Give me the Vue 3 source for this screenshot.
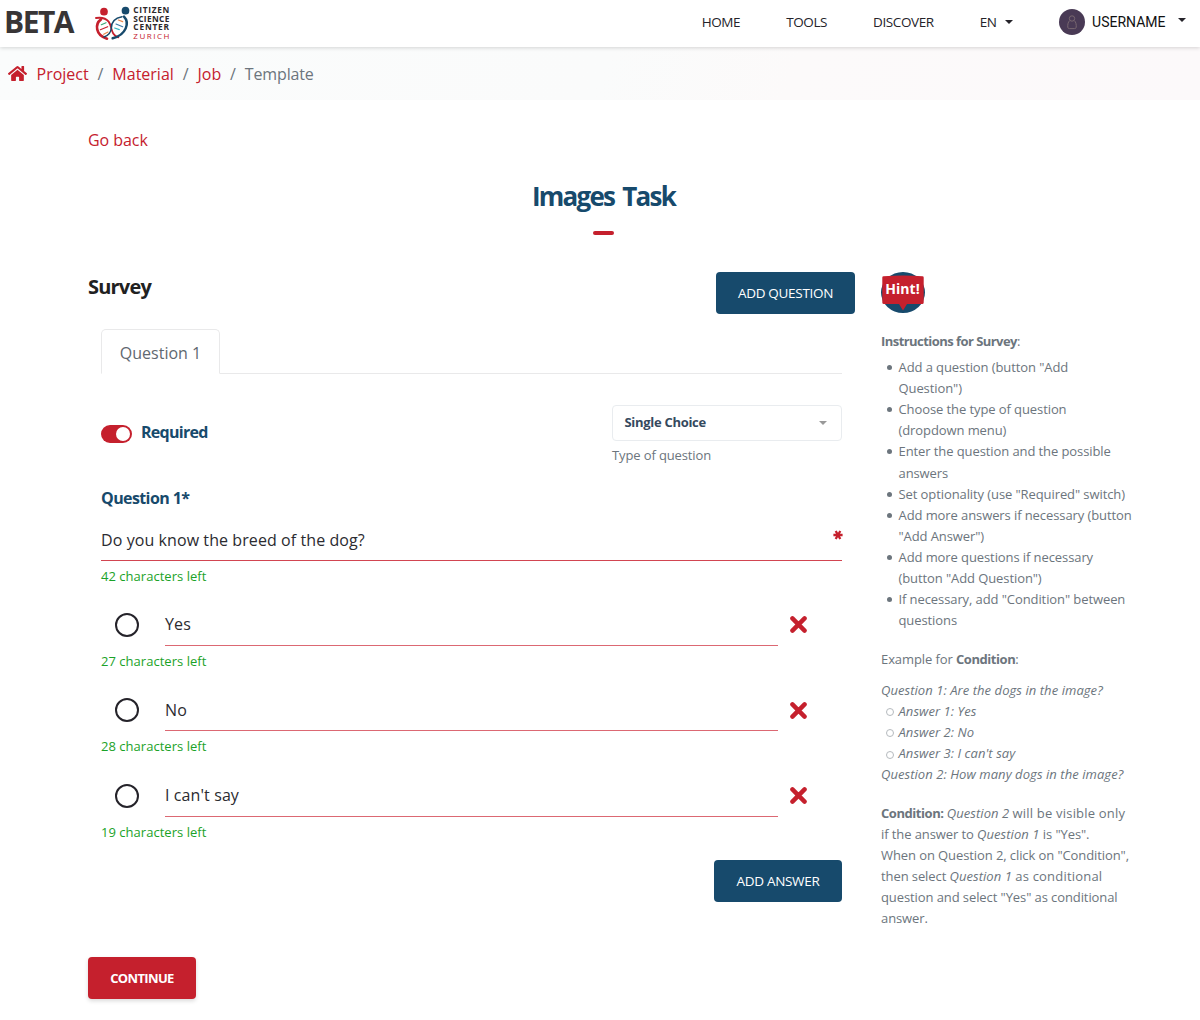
<script setup>
import { ref } from 'vue'

const navLinks = ['Home', 'Tools', 'Discover']
const crumbs = ['Project', 'Material', 'Job']

const question = ref({ text: 'Do you know the breed of the dog?', left: 42 })
const answers = ref([
  { text: 'Yes', left: 27 },
  { text: 'No', left: 28 },
  { text: "I can't say", left: 19 },
])
</script>

<template>
  <div class="page">
    <header class="topbar">
      <span class="beta">BETA</span>
      <svg class="logo" viewBox="285 18 228 105" role="img" aria-label="Citizen Science Center Zurich">
        <g fill="none" stroke-linecap="round">
          <path d="M304 74 318 68" stroke="#3aa776" stroke-width="3.5" />
          <path d="M301 89 323 80" stroke="#c5202d" stroke-width="3.5" />
          <path d="M311 103 324 96" stroke="#e9854a" stroke-width="3.5" />
          <path d="M355 60 368 65" stroke="#e9854a" stroke-width="3.5" />
          <path d="M348 72 368 80" stroke="#3a78a8" stroke-width="3.5" />
          <path d="M344 84 358 89" stroke="#35b6c4" stroke-width="3.5" />
          <path d="M288 54Q314 50 326 65C337 80 331 104 355 112" stroke="#c5202d" stroke-width="5.500" />
          <path d="M303 58C284 72 286 106 321 116" stroke="#c5202d" stroke-width="8" />
          <path d="M366 50C344 54 334 68 334 84C333 96 327 106 312 111" stroke="#174a6c" stroke-width="4.500" />
          <path d="M372 50C389 68 380 104 338 115" stroke="#174a6c" stroke-width="7.500" />
        </g>
        <circle cx="312" cy="35" r="11.500" fill="#c5202d" />
        <circle cx="376.500" cy="32" r="11.500" fill="#174a6c" />
        <g class="logo-text">
          <text x="400" y="39" textLength="108">CITIZEN</text>
          <text x="400" y="65" textLength="108">SCIENCE</text>
          <text x="400" y="91" textLength="107">CENTER</text>
          <text x="400" y="118" textLength="108" class="city">ZURICH</text>
        </g>
      </svg>
      <nav class="nav">
        <a v-for="n in navLinks" :key="n">{{ n }}</a>
        <a class="lang">EN <i class="caret"></i></a>
      </nav>
      <div class="user">
        <svg class="avatar" viewBox="0 0 26 26">
          <circle cx="13" cy="13" r="13" fill="#493a55" />
          <g fill="none" stroke="#7d6c73" stroke-width="0.9">
            <circle cx="13" cy="9.500" r="2.700" />
            <path d="M10.800 11.500C8.900 13 8.600 16 8.800 18.300Q9 19.600 10.500 19.600H15.500Q17 19.600 17.200 18.300C17.400 16 17.100 13 15.200 11.500" />
          </g>
        </svg>
        <span>USERNAME</span>
        <i class="caret"></i>
      </div>
    </header>

    <div class="crumbs">
      <svg class="home" viewBox="0 0 576 512" fill="#c5202d">
        <path d="M280.370 148.260L96 300.110V464a16 16 0 0 0 16 16l112.060-.290a16 16 0 0 0 15.920-16V368a16 16 0 0 1 16-16h64a16 16 0 0 1 16 16v95.640a16 16 0 0 0 16 16.050L464 480a16 16 0 0 0 16-16V300L295.670 148.260a12.190 12.190 0 0 0-15.300 0zM571.600 251.470L488 182.560V44.050a12 12 0 0 0-12-12h-56a12 12 0 0 0-12 12v72.610L318.470 43a48 48 0 0 0-61 0L4.340 251.470a12 12 0 0 0-1.600 16.900l25.500 31A12 12 0 0 0 45.150 301l235.220-193.740a12.190 12.190 0 0 1 15.300 0L530.900 301a12 12 0 0 0 16.900-1.600l25.500-31a12 12 0 0 0-1.700-16.930z" />
      </svg>
      <template v-for="c in crumbs" :key="c"><a>{{ c }}</a><span class="sep">/</span></template>
      <span class="current">Template</span>
    </div>

    <main class="main">
      <a class="back">Go back</a>
      <h1>Images Task</h1>
      <div class="columns">
        <section class="survey">
          <div class="survey-head">
            <h2>Survey</h2>
            <button class="btn navy add-question">ADD QUESTION</button>
          </div>
          <div class="panel">
            <div class="tabs"><span class="tab">Question 1</span></div>
            <div class="options">
              <div class="required"><span class="switch"></span>Required</div>
              <div class="type">
                <div class="select">Single Choice<i class="arrow"></i></div>
                <div class="type-hint">Type of question</div>
              </div>
            </div>
            <div class="q-label">Question 1*</div>
            <div class="field q-field">{{ question.text }}
              <svg class="star" viewBox="0 0 10 10"><path d="M.4 5H9.600M2.700 1 7.300 9M7.300 1 2.700 9" stroke="#c5202d" stroke-width="2.300" /></svg>
            </div>
            <div class="left">{{ question.left }} characters left</div>
            <div v-for="a in answers" :key="a.text" class="answer">
              <div class="answer-row">
                <span class="radio"></span>
                <div class="field">{{ a.text }}</div>
                <svg class="remove" viewBox="0 0 16 16"><path d="M2.300 2.300 13.700 13.700M13.700 2.300 2.300 13.700" stroke="#c5202d" stroke-width="4.200" stroke-linecap="round" /></svg>
              </div>
              <div class="left">{{ a.left }} characters left</div>
            </div>
            <div class="add-row"><button class="btn navy add-answer">ADD ANSWER</button></div>
          </div>
          <button class="btn red">CONTINUE</button>
        </section>

        <aside class="help">
          <svg class="hint" viewBox="0 0 44 41">
            <ellipse cx="22" cy="20.500" rx="22" ry="20.500" fill="#174a6c" />
            <path d="M1.300 5.500Q1.300 4.300 2.500 4.300Q22 2.500 41.500 4.300Q42.700 4.300 42.700 5.500V30.500Q42.700 32 41.200 32H26L22 38.500 18 32H3Q1.300 32 1.300 30.500Z" fill="#c5202d" />
            <text x="4.200" y="21.500" textLength="34.500">Hint!</text>
          </svg>
          <p class="lead"><b>Instructions for Survey</b>:</p>
          <ul>
            <li>Add a question (button "Add<br>Question")</li>
            <li>Choose the type of question<br>(dropdown menu)</li>
            <li>Enter the question and the possible<br>answers</li>
            <li>Set optionality (use "Required" switch)</li>
            <li>Add more answers if necessary (button<br>"Add Answer")</li>
            <li>Add more questions if necessary<br>(button "Add Question")</li>
            <li>If necessary, add "Condition" between<br>questions</li>
          </ul>
          <p class="example">Example for <b>Condition</b>:</p>
          <div class="sample">
            <em>Question 1: Are the dogs in the image?</em>
            <ul class="hollow">
              <li><em>Answer 1: Yes</em></li>
              <li><em>Answer 2: No</em></li>
              <li><em>Answer 3: I can't say</em></li>
            </ul>
            <em>Question 2: How many dogs in the image?</em>
          </div>
          <p class="condition">
            <b>Condition:</b> <em>Question 2</em> <span class="loose">will be visible only</span><br>
            if the answer to <em>Question 1</em> is "Yes".<br>
            When on Question 2, click on "Condition",<br>
            then select <em>Question 1</em> <span class="loose">as conditional</span><br>
            question and select "Yes" as conditional<br>
            answer.
          </p>
        </aside>
      </div>
    </main>
  </div>
</template>

<style>
body { background: #fff; }
</style>

<style scoped>
* { box-sizing: border-box; }
.page {
  height: 1020px;
  overflow: hidden;
  font-family: "Open Sans", "Noto Sans", sans-serif;
  font-size: 16px;
  line-height: 22px;
  color: #212529;
  white-space: nowrap;
}
h1, h2, p, ul { margin: 0; padding: 0; }
button { border: 0; font-family: inherit; }

.topbar {
  position: relative;
  display: flex;
  align-items: flex-start;
  height: 47px;
  background: #fff;
  box-shadow: 0 1px 4px rgba(0, 0, 0, 0.16);
}
.beta {
  width: 90px;
  padding-left: 4px;
  font-size: 30px;
  font-weight: 700;
  line-height: 44px;
  letter-spacing: -1.500px;
  color: #383536;
}
.logo { width: 76px; height: 35px; margin: 6px 0 0 5px; overflow: visible; }
.logo-text text { font-size: 25px; font-weight: 700; fill: #2c292b; }
.logo-text .city { font-size: 24px; font-weight: 400; fill: #c5202d; }
.nav {
  display: flex;
  gap: 46px;
  margin-left: auto;
  padding-right: 46.500px;
  font-size: 13.500px;
  line-height: 44px;
  letter-spacing: -0.400px;
  text-transform: uppercase;
  color: #25232a;
}
.lang { display: flex; align-items: center; gap: 8px; }
.caret {
  border: 4px solid transparent;
  border-top-color: #25232a;
  border-bottom: 0;
}
.lang .caret { margin-top: -1px; }
.user {
  display: flex;
  align-items: center;
  height: 43px;
  padding-right: 14.500px;
  font-family: Roboto, sans-serif;
  font-size: 14px;
  color: #111;
}
.user .caret { margin: -3px 0 0 12px; }
.avatar { width: 26px; height: 26px; margin-right: 7px; }

.crumbs {
  display: flex;
  align-items: center;
  height: 53px;
  padding-left: 8px;
  background: linear-gradient(110deg, #fafcfc 0%, #fafbfb 50%, #fcfafa 66%, #fcf9fa 100%);
  color: #6c757d;
}
.crumbs a, .back { color: #c5202d; }
.home { width: 19px; height: 17px; margin-right: 9.500px; }
.sep { margin: 0 8.900px; }
.current { letter-spacing: -0.150px; }

.main { padding: 29px 0 0 88px; }
.back { display: block; letter-spacing: -0.050px; }
h1 {
  display: flex;
  flex-direction: column;
  align-items: center;
  width: 1031px;
  margin-top: 29px;
  font-size: 26px;
  font-weight: 700;
  line-height: 33px;
  letter-spacing: -1.750px;
  word-spacing: 3px;
  color: #174a6c;
}
h1::after {
  content: "";
  width: 21px;
  height: 3.500px;
  margin-top: 18px;
  border-radius: 2px;
  background: #c5202d;
}
.columns { display: flex; gap: 26px; margin-top: 37.500px; }
.survey { width: 767px; }
.survey-head { display: flex; justify-content: space-between; height: 57px; }
h2 { margin-top: 4px; font-size: 20px; font-weight: 700; letter-spacing: -0.800px; color: #212121; }
.btn {
  height: 42px;
  padding: 0;
  border-radius: 4px;
  font-size: 13.500px;
  line-height: 42px;
  letter-spacing: -0.300px;
  color: #fff;
}
.navy { background: #174a6c; }
.add-question { width: 139px; }
.add-answer { width: 128px; }
.red {
  display: block;
  width: 108px;
  margin-top: 55px;
  background: #c5202d;
  font-size: 13px;
  font-weight: 700;
  letter-spacing: -0.650px;
  box-shadow: 0 2px 4px rgba(0, 0, 0, 0.15);
}
.panel { width: 741px; margin-left: 13px; }
.tabs { height: 45px; border-bottom: 1px solid #e9e9ea; }
.tab {
  display: block;
  width: 119px;
  height: 45px;
  border: 1px solid #e9e9ea;
  border-bottom-color: #fff;
  border-radius: 5px 5px 0 0;
  line-height: 46px;
  text-align: center;
  color: #5f6870;
}
.options { display: flex; justify-content: space-between; height: 113px; padding-top: 31px; }
.required {
  display: flex;
  gap: 9px;
  height: 22px;
  margin-top: 16px;
  font-weight: 700;
  letter-spacing: -0.720px;
  color: #174a6c;
}
.switch {
  display: flex;
  justify-content: flex-end;
  width: 31px;
  height: 18px;
  margin-top: 4px;
  padding: 2px;
  border-radius: 9px;
  background: #c5202d;
}
.switch::after { content: ""; width: 14px; height: 14px; border-radius: 50%; background: #fff; }
.type { width: 230px; }
.select {
  display: flex;
  align-items: center;
  justify-content: space-between;
  height: 36px;
  padding: 0 14px 2px 11.500px;
  border: 1px solid #e9ecef;
  border-radius: 4px;
  font-size: 13px;
  font-weight: 700;
  letter-spacing: -0.300px;
  color: #35495e;
}
.arrow { margin-top: 2px; border: 4px solid transparent; border-top-color: #999; border-bottom: 0; }
.type-hint { margin-top: 3px; font-size: 13px; letter-spacing: -0.120px; color: #6c757d; }
.q-label { font-weight: 700; letter-spacing: -0.600px; color: #174a6c; }
.field {
  display: flex;
  justify-content: space-between;
  height: 42px;
  border-bottom: 1px solid #dc6873;
  line-height: 42px;
  color: #2b2b30;
}
.q-field { height: 52px; padding-top: 10px; letter-spacing: 0.080px; border-color: #d24551; }
.star { width: 10px; height: 10px; margin: 10.500px -1px 0 0; }
.left { margin-top: 4px; font-size: 13px; letter-spacing: 0.030px; color: #1ba228; }
.answer { padding-top: 17.200px; height: 85.500px; }
.answer-row { display: flex; height: 41.500px; }
.answer-row .field { width: 613px; height: 41.500px; line-height: 41.500px; letter-spacing: 0.100px; }
.radio {
  width: 24px;
  height: 24px;
  margin: 8.500px 26px 0 14px;
  border: 2px solid #25232a;
  border-radius: 50%;
}
.remove { width: 17px; height: 17px; margin: 12px 0 0 12px; }
.add-row { display: flex; justify-content: flex-end; margin-top: 16.500px; }

.help { width: 260px; font-size: 13px; line-height: 21.120px; letter-spacing: -0.090px; color: #6c757d; }
.help b { font-weight: 700; letter-spacing: -0.550px; }
.help .condition b, .help .example b { letter-spacing: -0.450px; }
.help em { letter-spacing: 0.060px; }
.help .loose { letter-spacing: 0.200px; }
.hint { display: block; width: 44px; height: 41px; }
.hint text { font-size: 14px; font-weight: 700; fill: #fff; }
.lead { margin: 18px 0 4.800px; }
.help ul { list-style: none; }
.help li { position: relative; padding-left: 17.500px; }
.help li::before {
  content: "";
  position: absolute;
  top: 8px;
  left: 5.500px;
  width: 5px;
  height: 5px;
  border-radius: 50%;
  background: #6c757d;
}
.help .hollow li::before { top: 7.500px; left: 5px; background: none; border: 1px solid #b5babe; width: 6px; height: 6px; }
.example { margin-top: 17.500px; }
.sample { margin-top: 9.500px; }
.condition { margin-top: 17.500px; }
</style>
